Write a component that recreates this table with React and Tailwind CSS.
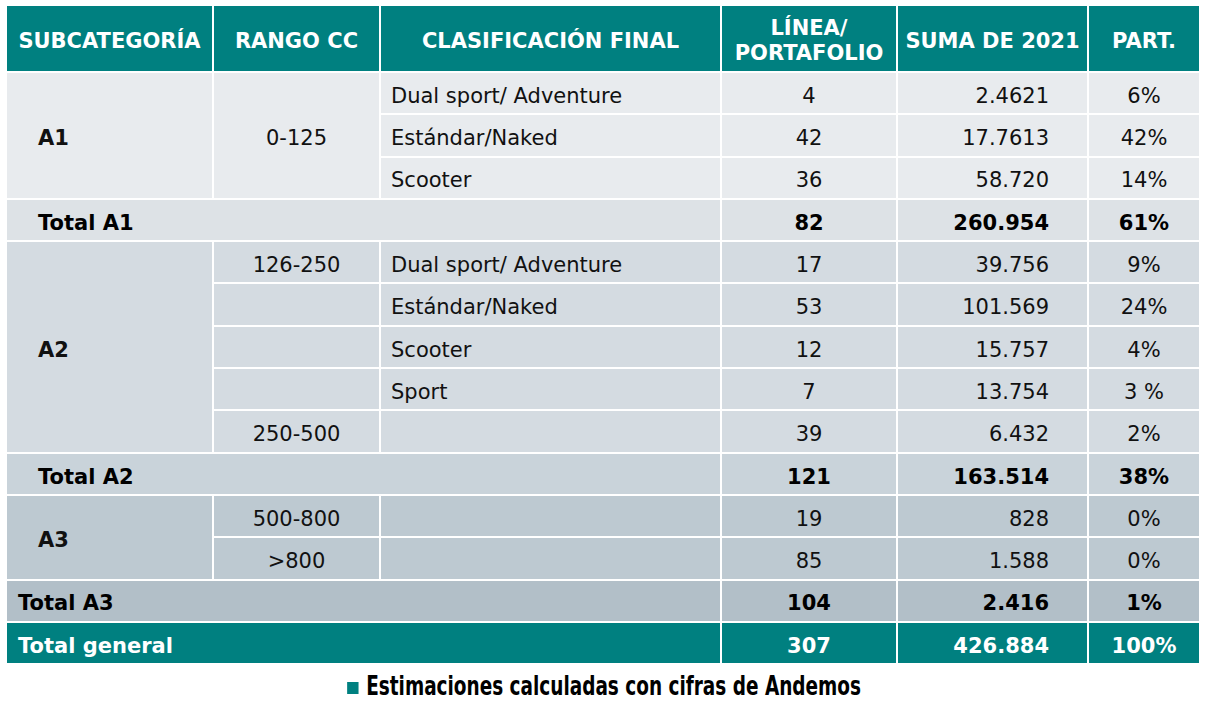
import React from 'react';

// ─ Data ────────────────────────────────────────────────────────────

const A1_ROWS = [
  { clase: 'Dual sport/ Adventure', linea: '4', suma: '2.4621', part: '6%' },
  { clase: 'Estándar/Naked', linea: '42', suma: '17.7613', part: '42%' },
  { clase: 'Scooter', linea: '36', suma: '58.720', part: '14%' },
];

const A2_ROWS = [
  { rango: '126-250', clase: 'Dual sport/ Adventure', linea: '17', suma: '39.756', part: '9%' },
  { rango: '', clase: 'Estándar/Naked', linea: '53', suma: '101.569', part: '24%' },
  { rango: '', clase: 'Scooter', linea: '12', suma: '15.757', part: '4%' },
  { rango: '', clase: 'Sport', linea: '7', suma: '13.754', part: '3 %' },
  { rango: '250-500', clase: '', linea: '39', suma: '6.432', part: '2%' },
];

const A3_ROWS = [
  { rango: '500-800', linea: '19', suma: '828', part: '0%' },
  { rango: '>800', linea: '85', suma: '1.588', part: '0%' },
];

// ─ Cell helpers ────────────────────────────────────────────────────

const Cell = ({ bg, className = '', children }) => (
  <div className={`flex items-center pt-[7px] whitespace-nowrap ${bg} ${className}`}>{children}</div>
);

const Head = ({ children }) => (
  <div className="flex items-center justify-center text-center bg-[#008080] text-white font-bold leading-[25px] pt-[5px] whitespace-nowrap">
    {children}
  </div>
);

const NumCells = ({ bg, linea, suma, part, bold }) => (
  <>
    <Cell bg={bg} className={`justify-center ${bold ? 'font-bold' : ''}`}>{linea}</Cell>
    <Cell bg={bg} className={`justify-end pr-[38px] ${bold ? 'font-bold' : ''}`}>{suma}</Cell>
    <Cell bg={bg} className={`justify-center ${bold ? 'font-bold' : ''}`}>{part}</Cell>
  </>
);

const TotalRow = ({ bg, label, linea, suma, part, pad = 'pl-[31px]', text = 'text-black' }) => (
  <>
    <Cell bg={bg} className={`col-span-3 font-bold ${pad} ${text}`}>{label}</Cell>
    <Cell bg={bg} className={`justify-center font-bold ${text}`}>{linea}</Cell>
    <Cell bg={bg} className={`justify-end pr-[38px] font-bold ${text}`}>{suma}</Cell>
    <Cell bg={bg} className={`justify-center font-bold ${text}`}>{part}</Cell>
  </>
);

// ─ Main Component ──────────────────────────────────────────────────

export default function App() {
  return (
    <div className="w-[1208px] h-[710px] bg-white pt-[6px] pl-[7px] text-[21px] text-[#111] font-['DejaVu_Sans',sans-serif]">
      <div className="grid grid-cols-[205px_165px_339px_174px_189px_110px] grid-rows-[65px_repeat(14,40.3px)] gap-[2px] w-[1192px]">
        <Head>SUBCATEGORÍA</Head>
        <Head>RANGO CC</Head>
        <Head>CLASIFICACIÓN FINAL</Head>
        <Head>LÍNEA/<br />PORTAFOLIO</Head>
        <Head>SUMA DE 2021</Head>
        <Head>PART.</Head>

        {/* A1 */}
        <Cell bg="bg-[#e8ebee]" className="row-span-3 pl-[31px] font-bold">A1</Cell>
        <Cell bg="bg-[#e8ebee]" className="row-span-3 justify-center">0-125</Cell>
        {A1_ROWS.map(r => (
          <React.Fragment key={r.clase}>
            <Cell bg="bg-[#e8ebee]" className="pl-[10px]">{r.clase}</Cell>
            <NumCells bg="bg-[#e8ebee]" {...r} />
          </React.Fragment>
        ))}
        <TotalRow bg="bg-[#dde2e6]" label="Total A1" linea="82" suma="260.954" part="61%" />

        {/* A2 */}
        <Cell bg="bg-[#d4dbe1]" className="row-span-5 pl-[31px] font-bold">A2</Cell>
        {A2_ROWS.map((r, i) => (
          <React.Fragment key={i}>
            <Cell bg="bg-[#d4dbe1]" className="justify-center">{r.rango}</Cell>
            <Cell bg="bg-[#d4dbe1]" className="pl-[10px]">{r.clase}</Cell>
            <NumCells bg="bg-[#d4dbe1]" {...r} />
          </React.Fragment>
        ))}
        <TotalRow bg="bg-[#c9d3da]" label="Total A2" linea="121" suma="163.514" part="38%" />

        {/* A3 */}
        <Cell bg="bg-[#bdc9d1]" className="row-span-2 pl-[31px] font-bold">A3</Cell>
        {A3_ROWS.map(r => (
          <React.Fragment key={r.rango}>
            <Cell bg="bg-[#bdc9d1]" className="justify-center">{r.rango}</Cell>
            <Cell bg="bg-[#bdc9d1]" />
            <NumCells bg="bg-[#bdc9d1]" {...r} />
          </React.Fragment>
        ))}
        <TotalRow bg="bg-[#b2bfc8]" label="Total A3" linea="104" suma="2.416" part="1%" pad="pl-[11px]" />
        <TotalRow bg="bg-[#008080]" label="Total general" linea="307" suma="426.884" part="100%" pad="pl-[11px]" text="text-white" />
      </div>

      {/* footnote: condensed face squeezed horizontally */}
      <div className="flex justify-center pt-[7px] pr-[7px]">
        <div className="flex items-center gap-[10px] scale-x-[0.76] origin-center">
          <span className="w-[15px] h-[12px] mt-[3px] bg-[#008080]" />
          <span className="font-['DejaVu_Sans_Condensed','DejaVu_Sans',sans-serif] font-bold text-[27px] leading-[32px] text-black whitespace-nowrap">
            Estimaciones calculadas con cifras de Andemos
          </span>
        </div>
      </div>
    </div>
  );
}
